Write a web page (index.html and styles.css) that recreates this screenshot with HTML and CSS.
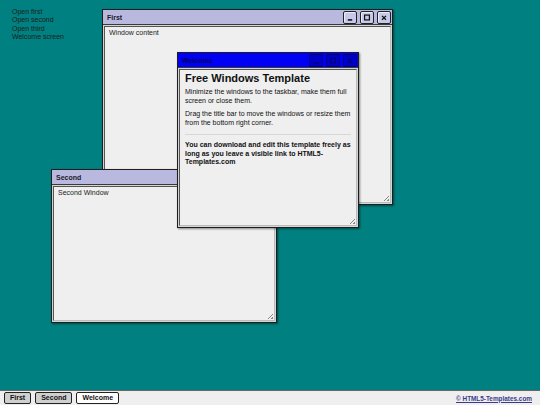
FILE: index.html
```html
<!DOCTYPE html>
<html>
<head>
<meta charset="utf-8">
<link rel="stylesheet" href="styles.css">
</head>
<body>
<div class="desktop">
  <main class="area">
    <ul class="menu">
      <li>Open first</li>
      <li>Open second</li>
      <li>Open third</li>
      <li>Welcome screen</li>
    </ul>

    <section class="window win-first">
      <header class="titlebar">
        <span class="title">First</span>
        <div class="controls">
          <span class="ctl"><svg viewBox="0 0 10 10"><rect x="3" y="6.5" width="4" height="1.4" fill="#111"/></svg></span>
          <span class="ctl"><svg viewBox="0 0 10 10"><rect x="2.8" y="2.8" width="4.4" height="4.4" fill="none" stroke="#111" stroke-width="1.1"/></svg></span>
          <span class="ctl"><svg viewBox="0 0 10 10"><path d="M3.2 3.5 L6.8 7 M6.8 3.5 L3.2 7" stroke="#111" stroke-width="1.2"/></svg></span>
        </div>
      </header>
      <div class="content">
        <p class="plain">Window content</p>
        <span class="grip"></span>
      </div>
    </section>

    <section class="window win-second">
      <header class="titlebar">
        <span class="title">Second</span>
      </header>
      <div class="content">
        <p class="plain">Second Window</p>
        <span class="grip"></span>
      </div>
    </section>

    <section class="window win-welcome">
      <header class="titlebar blue">
        <span class="title">Welcome</span>
        <div class="controls">
          <span class="ctl"><svg viewBox="0 0 10 10"><rect x="3" y="6.5" width="4" height="1.4" fill="#00007a"/></svg></span>
          <span class="ctl"><svg viewBox="0 0 10 10"><rect x="2.8" y="2.8" width="4.4" height="4.4" fill="none" stroke="#00007a" stroke-width="1.1"/></svg></span>
          <span class="ctl"><svg viewBox="0 0 10 10"><path d="M3.2 3.5 L6.8 7 M6.8 3.5 L3.2 7" stroke="#00007a" stroke-width="1.2"/></svg></span>
        </div>
      </header>
      <div class="content welcome-body">
        <h1>Free Windows Template</h1>
        <p>Minimize the windows to the taskbar, make them full screen or close them.</p>
        <p>Drag the title bar to move the windows or resize them from the bottom right corner.</p>
        <hr>
        <p class="strong">You can download and edit this template freely as long as you leave a visible link to HTML5-Templates.com</p>
        <span class="grip"></span>
      </div>
    </section>
  </main>

  <footer class="taskbar">
    <div class="tasks">
      <span class="task">First</span>
      <span class="task">Second</span>
      <span class="task active">Welcome</span>
    </div>
    <a class="credit" href="#">© HTML5-Templates.com</a>
  </footer>
</div>
</body>
</html>
```

FILE: styles.css
```css
* { box-sizing: border-box; }
html, body { margin: 0; padding: 0; }
body {
  width: 540px;
  height: 405px;
  overflow: hidden;
  font-family: "Liberation Sans", Arial, sans-serif;
  background: #008080;
}
.desktop {
  display: flex;
  flex-direction: column;
  width: 540px;
  height: 405px;
}
.area {
  position: relative;
  flex: 1;
}
.menu {
  list-style: none;
  margin: 0;
  padding: 8px 0 0 12px;
  font-size: 7px;
  line-height: 8.3px;
  color: #1c1c1c;
}

.window {
  position: absolute;
  display: flex;
  flex-direction: column;
  border: 1px solid #1e1e1e;
  background: #d4d4d4;
  box-shadow: 1px 1px 2px rgba(0,0,0,0.45);
}
.win-first { left: 102px; top: 9px; width: 291px; height: 196px; }
.win-second { left: 51px; top: 169px; width: 226px; height: 154px; }
.win-welcome { left: 177px; top: 52px; width: 182px; height: 176px; }

.titlebar {
  height: 15px;
  flex: none;
  display: flex;
  align-items: center;
  justify-content: space-between;
  padding: 0 1px 0 4px;
  background: #b9b9e0;
  border-bottom: 1px solid #3a3a3a;
}
.titlebar.blue { background: #0000f5; }
.title {
  font-size: 7px;
  font-weight: bold;
  color: #1a1a2a;
}
.blue .title { color: #00005a; }
.controls {
  display: flex;
  gap: 3px;
}
.ctl {
  width: 14px;
  height: 13px;
  border: 1px solid #222;
  border-radius: 2px;
  background: #c8c8ea;
  display: flex;
  box-shadow: inset 1px 1px 0 #eee;
}
.blue .ctl {
  background: #0000c8;
  border-color: #00007a;
  box-shadow: none;
}
.ctl svg { width: 12px; height: 11px; }

.content {
  position: relative;
  flex: 1;
  margin: 1px;
  background: #efefef;
  border: 1px solid;
  border-color: #555 #bbb #bbb #555;
}
.plain {
  margin: 0;
  padding: 2px 4px;
  font-size: 7px;
  color: #222;
}
.grip {
  position: absolute;
  right: 1px;
  bottom: 1px;
  width: 5px;
  height: 5px;
  background: linear-gradient(135deg, transparent 50%, #888 50%, #888 60%, transparent 60%, transparent 75%, #888 75%);
}

.welcome-body {
  padding: 1px 5px 0 5px;
  color: #111;
}
.welcome-body h1 {
  margin: 0 0 3px 0;
  font-size: 11px;
  line-height: 14px;
  font-weight: bold;
}
.welcome-body p {
  margin: 0 0 5px 0;
  font-size: 7px;
  line-height: 8.7px;
}
.welcome-body hr {
  margin: 6px 0 6px 0;
  border: 0;
  border-top: 1px solid #d6d6d6;
}
.welcome-body p.strong { font-weight: bold; }

.taskbar {
  height: 15px;
  flex: none;
  display: flex;
  align-items: center;
  justify-content: space-between;
  padding: 0 8px 0 4px;
  background: #efefef;
  border-top: 1px solid #666;
}
.tasks { display: flex; gap: 4px; }
.task {
  height: 12px;
  padding: 0 5px;
  font-size: 7px;
  font-weight: bold;
  line-height: 10px;
  color: #111;
  background: #cfcfcf;
  border: 1px solid #222;
  border-radius: 2px;
}
.task.active { background: #fff; }
.credit {
  font-size: 6.4px;
  font-weight: bold;
  color: #3a3a8a;
  text-decoration: underline;
}
```
